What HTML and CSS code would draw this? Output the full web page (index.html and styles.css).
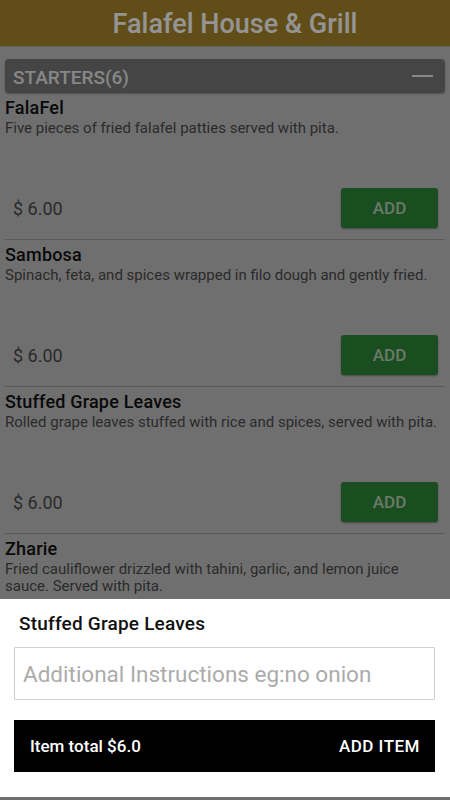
FILE: index.html
```html
<!DOCTYPE html>
<html lang="en">
<head>
  <meta charset="UTF-8">
  <title>Falafel House &amp; Grill</title>
  <meta name="viewport" content="width=device-width, initial-scale=1">
  <link rel="stylesheet" href="styles.css">
</head>
<body>

  <header class="topbar">Falafel House &amp; Grill</header>

  <div class="menu">
    <div class="category">
      <span>STARTERS(6)</span>
      <span class="collapse"></span>
    </div>

    <div class="item">
      <div class="item-name">FalaFel</div>
      <div class="item-desc">Five pieces of fried falafel patties served with pita.</div>
      <div class="item-foot">
        <span class="price">$ 6.00</span>
        <button class="add">ADD</button>
      </div>
    </div>

    <div class="item">
      <div class="item-name">Sambosa</div>
      <div class="item-desc">Spinach, feta, and spices wrapped in filo dough and gently fried.</div>
      <div class="item-foot">
        <span class="price">$ 6.00</span>
        <button class="add">ADD</button>
      </div>
    </div>

    <div class="item">
      <div class="item-name">Stuffed Grape Leaves</div>
      <div class="item-desc">Rolled grape leaves stuffed with rice and spices, served with pita.</div>
      <div class="item-foot">
        <span class="price">$ 6.00</span>
        <button class="add">ADD</button>
      </div>
    </div>

    <div class="item">
      <div class="item-name">Zharie</div>
      <div class="item-desc">Fried cauliflower drizzled with tahini, garlic, and lemon juice sauce. Served with pita.</div>
      <div class="item-foot">
        <span class="price">$ 6.00</span>
        <button class="add">ADD</button>
      </div>
    </div>
  </div>

  <div class="scrim"></div>

  <div class="sheet">
    <div class="sheet-title">Stuffed Grape Leaves</div>
    <input type="text" class="notes" placeholder="Additional Instructions eg:no onion">
    <button class="add-item">
      <span>Item total $6.0</span>
      <span class="add-item-label">ADD ITEM</span>
    </button>
  </div>

</body>
</html>
```

FILE: styles.css
```css
html, body {
  height: 100%;
}
body {
  margin: 0;
  font-family: Roboto, "Liberation Sans", sans-serif;
  background-color: #c0c0c0;
  color: #181818;
  overflow: hidden;
}
.topbar {
  height: 46px;
  line-height: 48px;
  padding-left: 20px;
  text-align: center;
  font-size: 27px;
  font-weight: 500;
  color: #fff;
  background-color: #a8862a;
  border-bottom: 1px solid #a8a8a8;
}
.menu {
  padding: 12px 5px 0;
}
.category {
  display: flex;
  align-items: center;
  justify-content: space-between;
  height: 34px;
  padding: 0 12px 0 8px;
  background-color: #787878;
  border-radius: 4px;
  color: #e8e8e8;
  font-size: 19px;
  font-weight: 500;
  box-shadow: 0 1px 2px rgba(0, 0, 0, 0.3);
}
.category span:first-child {
  padding-top: 3px;
}
.collapse {
  width: 21px;
  height: 2px;
  background-color: #e8e8e8;
}
.item {
  display: flex;
  flex-direction: column;
  height: 147px;
  box-sizing: border-box;
  padding: 4px 0 11px;
  border-bottom: 1px solid #9a9a9a;
}
.item:first-of-type {
  margin-top: 1px;
}
.item-name {
  font-size: 18px;
  font-weight: 500;
  line-height: 22px;
  letter-spacing: 0.2px;
  color: #111;
}
.item-desc {
  font-size: 15px;
  line-height: 17px;
  margin-top: 1px;
  color: #4a4a4a;
}
.item-foot {
  margin-top: auto;
  display: flex;
  align-items: center;
  justify-content: space-between;
  padding: 0 7px 0 8px;
}
.price {
  font-size: 18px;
  color: #4a4a4a;
}
.add {
  width: 97px;
  height: 40px;
  border: none;
  border-radius: 3px;
  background-color: #2e8636;
  color: #b8d0b6;
  font-family: inherit;
  font-size: 17px;
  font-weight: 500;
  box-shadow: 0 1px 2px rgba(0, 0, 0, 0.35);
}
.scrim {
  position: fixed;
  inset: 0;
  background-color: rgba(0, 0, 0, 0.42);
}
.sheet {
  position: fixed;
  left: 0;
  right: 0;
  bottom: 3px;
  height: 198px;
  box-sizing: border-box;
  padding: 12px 15px 0 14px;
  background-color: #fff;
}
.sheet-title {
  padding-left: 5px;
  font-size: 19px;
  font-weight: 500;
  line-height: 25px;
  letter-spacing: 0.2px;
  color: #111;
}
.notes {
  display: block;
  width: 100%;
  height: 53px;
  margin-top: 11px;
  box-sizing: border-box;
  padding: 0 8px;
  border: 1px solid #cfcfcf;
  border-radius: 1px;
  font-family: inherit;
  font-size: 22.5px;
  outline: none;
}
.notes::placeholder {
  color: #ababab;
}
.add-item {
  display: flex;
  align-items: center;
  justify-content: space-between;
  width: 100%;
  height: 52px;
  margin-top: 20px;
  padding: 0 15px 0 16px;
  border: none;
  background-color: #000;
  color: #fff;
  font-family: inherit;
  font-size: 17px;
  font-weight: 500;
}
.add-item-label {
  letter-spacing: 0.5px;
}
```
